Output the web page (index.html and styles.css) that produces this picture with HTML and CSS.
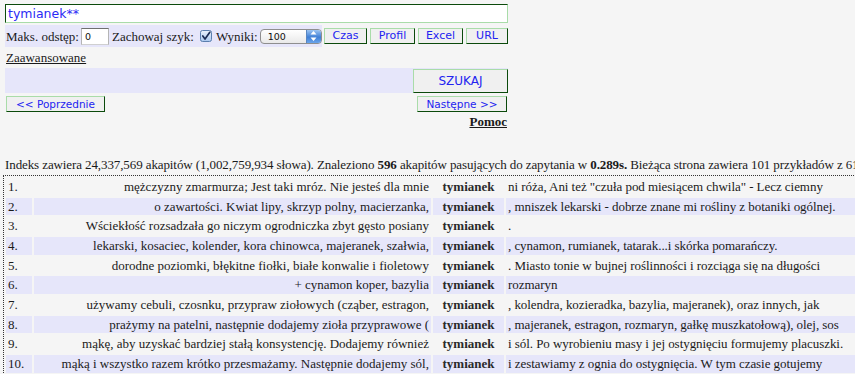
FILE: index.html
```html
<!DOCTYPE html>
<html lang="pl">
<head>
<meta charset="utf-8">
<title>Wyszukiwarka</title>
<link rel="stylesheet" href="styles.css">
</head>
<body>
<div class="page">
  <form class="form">
    <div class="query">tymianek**</div>
    <div class="opts-row">
      <div class="opts">
        <span class="lbl">Maks. odstęp:</span>
        <span class="small-input">0</span>
        <span class="lbl">Zachowaj szyk:</span>
        <svg class="check" width="12" height="12" viewBox="0 0 12 12">
          <defs>
            <linearGradient id="cb" x1="0" y1="0" x2="0" y2="1">
              <stop offset="0" stop-color="#eaf2fc"/>
              <stop offset="1" stop-color="#a9c7ee"/>
            </linearGradient>
          </defs>
          <rect x="0.5" y="0.5" width="11" height="11" rx="2" fill="url(#cb)" stroke="#5b7fae"/>
          <path d="M2.8 6 L5 9 L9.8 2.3" fill="none" stroke="#1b2d55" stroke-width="1.7" stroke-linecap="round" stroke-linejoin="round"/>
        </svg>
        <span class="lbl">Wyniki:</span>
        <span class="select"><span class="sel-val">100</span><span class="sel-arrows"><svg width="9" height="12" viewBox="0 0 9 12"><path d="M4.5 1 L7.5 4.5 L1.5 4.5 Z M4.5 11 L7.5 7.5 L1.5 7.5 Z" fill="#fff"/></svg></span></span>
      </div>
      <span class="btn btn-czas">Czas</span>
      <span class="btn btn-profil">Profil</span>
      <span class="btn btn-excel">Excel</span>
      <span class="btn btn-url">URL</span>
    </div>
    <div class="adv-row"><a class="link" href="#">Zaawansowane</a></div>
    <div class="search-row">
      <div class="search-fill"></div>
      <span class="btn btn-szukaj">SZUKAJ</span>
    </div>
    <div class="nav-row">
      <span class="btn btn-nav btn-prev">&lt;&lt; Poprzednie</span>
      <span class="btn btn-nav btn-next">Następne &gt;&gt;</span>
    </div>
    <div class="help-row"><a class="link help" href="#">Pomoc</a></div>
  </form>

  <p class="summary">Indeks zawiera 24,337,569 akapitów (1,002,759,934 słowa). Znaleziono <b>596</b> akapitów pasujących do zapytania w <b>0.289s.</b> Bieżąca strona zawiera 101 przykładów z 613.</p>

  <table class="results">
    <colgroup>
      <col class="c-num"><col class="c-left"><col class="c-key"><col class="c-right">
    </colgroup>
    <tbody>
      <tr><td class="num">1.</td><td class="left">mężczyzny zmarmurza; Jest taki mróz. Nie jesteś dla mnie</td><td class="key">tymianek</td><td class="right">ni róża, Ani też "czuła pod miesiącem chwila" - Lecz ciemny</td></tr>
      <tr class="alt"><td class="num">2.</td><td class="left">o zawartości. Kwiat lipy, skrzyp polny, macierzanka,</td><td class="key">tymianek</td><td class="right">, mniszek lekarski - dobrze znane mi rośliny z botaniki ogólnej.</td></tr>
      <tr><td class="num">3.</td><td class="left">Wściekłość rozsadzała go niczym ogrodniczka zbyt gęsto posiany</td><td class="key">tymianek</td><td class="right">.</td></tr>
      <tr class="alt"><td class="num">4.</td><td class="left">lekarski, kosaciec, kolender, kora chinowca, majeranek, szałwia,</td><td class="key">tymianek</td><td class="right">, cynamon, rumianek, tatarak...i skórka pomarańczy.</td></tr>
      <tr><td class="num">5.</td><td class="left">dorodne poziomki, błękitne fiołki, białe konwalie i fioletowy</td><td class="key">tymianek</td><td class="right">. Miasto tonie w bujnej roślinności i rozciąga się na długości</td></tr>
      <tr class="alt"><td class="num">6.</td><td class="left">+ cynamon koper, bazylia</td><td class="key">tymianek</td><td class="right">rozmaryn</td></tr>
      <tr><td class="num">7.</td><td class="left">używamy cebuli, czosnku, przypraw ziołowych (cząber, estragon,</td><td class="key">tymianek</td><td class="right">, kolendra, kozieradka, bazylia, majeranek), oraz innych, jak</td></tr>
      <tr class="alt"><td class="num">8.</td><td class="left">prażymy na patelni, następnie dodajemy zioła przyprawowe (</td><td class="key">tymianek</td><td class="right">, majeranek, estragon, rozmaryn, gałkę muszkatołową), olej, sos</td></tr>
      <tr><td class="num">9.</td><td class="left">mąkę, aby uzyskać bardziej stałą konsystencję. Dodajemy również</td><td class="key">tymianek</td><td class="right">i sól. Po wyrobieniu masy i jej ostygnięciu formujemy placuszki.</td></tr>
      <tr class="alt"><td class="num">10.</td><td class="left">mąką i wszystko razem krótko przesmażamy. Następnie dodajemy sól,</td><td class="key">tymianek</td><td class="right">i zestawiamy z ognia do ostygnięcia. W tym czasie gotujemy</td></tr>
    </tbody>
  </table>
</div>
</body>
</html>
```

FILE: styles.css
```css
html, body {
  margin: 0;
  padding: 0;
  overflow: hidden;
  background: #f5f5f5;
}

body {
  font-family: "Liberation Serif", "Times New Roman", serif;
  font-size: 13px;
  color: #1a1a1a;
}

.page {
  padding-top: 4px;
  white-space: nowrap;
}

.form {
  margin: 0 0 0 5px;
  width: 503px;
  display: flex;
  flex-direction: column;
}

.query {
  box-sizing: border-box;
  height: 19px;
  background: #fff;
  border: 1px solid;
  border-color: #0b4a0b #a9dca9 #a9dca9 #0b4a0b;
  font-family: "DejaVu Sans", Verdana, sans-serif;
  font-size: 12.5px;
  line-height: 17px;
  padding-left: 2px;
  color: #2a2af5;
}

.opts-row {
  margin-top: 2px;
  height: 22px;
  display: flex;
  align-items: center;
}

.opts {
  height: 22px;
  width: 317px;
  background: #e6e6fa;
  display: flex;
  align-items: center;
  padding-left: 1px;
  box-sizing: border-box;
}

.lbl {
  line-height: 15px;
}

.small-input {
  box-sizing: border-box;
  width: 28px;
  height: 17px;
  margin: 0 3px 0 2px;
  background: #fff;
  border: 1px solid;
  border-color: #6f6f6f #b5b5b5 #d0d0d0 #b5b5b5;
  font-family: "DejaVu Sans", sans-serif;
  font-size: 9.5px;
  line-height: 15px;
  padding-left: 3px;
  color: #111;
}

.check {
  margin: 0 4px 0 6px;
  display: block;
}

.select {
  box-sizing: border-box;
  margin-left: 2px;
  width: 62px;
  height: 15px;
  border: 1px solid #8e8e8e;
  border-radius: 4px;
  background: linear-gradient(#ffffff, #e9e9e9);
  display: flex;
  overflow: hidden;
}

.sel-val {
  flex: 1;
  font-family: "DejaVu Sans", sans-serif;
  font-size: 9.5px;
  line-height: 13px;
  padding-left: 7px;
  color: #111;
}

.sel-arrows {
  width: 14px;
  background: linear-gradient(#9cc4f2, #3f7fd6 55%, #6aa5ec);
  border-left: 1px solid #5a86c0;
  display: flex;
  align-items: center;
  justify-content: center;
}

.sel-arrows svg {
  display: block;
}

.btn {
  box-sizing: border-box;
  display: flex;
  align-items: center;
  justify-content: center;
  background: #f0f0f0;
  border: 1px solid;
  border-color: #a9dca9 #0b4a0b #0b4a0b #a9dca9;
  font-family: "DejaVu Sans", Verdana, sans-serif;
  font-size: 11px;
  color: #2323f0;
  height: 16px;
  line-height: 14px;
}

.btn-czas { width: 43px; margin-left: 2px; }
.btn-profil { width: 45px; margin-left: 3px; }
.btn-excel { width: 45px; margin-left: 3px; }
.btn-url { width: 42px; margin-left: 3px; }

.adv-row {
  height: 21px;
  display: flex;
  align-items: center;
  padding-left: 1px;
}

.link {
  color: #1a1a1a;
  text-decoration: underline;
  line-height: 15px;
}

.search-row {
  height: 25px;
  display: flex;
  align-items: flex-end;
  background: #e6e6fa;
}

.search-fill {
  flex: 1;
}

.btn-szukaj {
  width: 95px;
  height: 24px;
  font-size: 12px;
}

.nav-row {
  margin-top: 3px;
  display: flex;
  justify-content: space-between;
}

.btn-nav {
  height: 16px;
  font-size: 10.5px;
}

.btn-prev { width: 99px; margin-left: 1px; }
.btn-next { width: 90px; margin-right: 1px; }

.help-row {
  margin-top: 2px;
  display: flex;
  justify-content: flex-end;
  padding-right: 1px;
}

.help {
  font-weight: bold;
}

.summary {
  margin: 28px 0 0 5px;
  line-height: 15px;
  letter-spacing: -0.1px;
}

.results {
  margin: 3px 0 0 3px;
  border-top: 1px dotted #333;
  border-left: 1px dotted #333;
  border-spacing: 2px;
  table-layout: fixed;
  width: 995px;
}

.c-num { width: 26px; }
.c-left { width: 397px; }
.c-key { width: 71px; }
.c-right { width: 490px; }

.results td {
  box-sizing: border-box;
  padding: 1px 2px;
  line-height: 15.67px;
  white-space: nowrap;
  overflow: hidden;
}

.results tr.alt td {
  background: #e6e6fa;
}

.num { text-align: left; }
.left { text-align: right; }
.key { text-align: center; font-weight: bold; color: #2a2a2a; }
.right { text-align: left; letter-spacing: -0.05px; }
```
